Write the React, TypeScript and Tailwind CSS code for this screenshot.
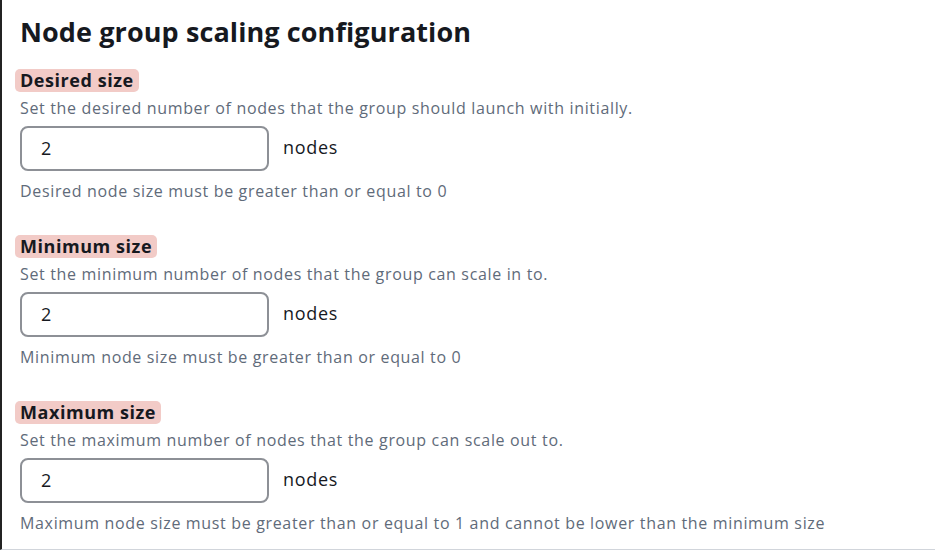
import React from "react";

interface SizeField {
  label: string;
  description: string;
  value: string;
  hint: string;
}

const FIELDS: SizeField[] = [
  {
    label: "Desired size",
    description:
      "Set the desired number of nodes that the group should launch with initially.",
    value: "2",
    hint: "Desired node size must be greater than or equal to 0",
  },
  {
    label: "Minimum size",
    description: "Set the minimum number of nodes that the group can scale in to.",
    value: "2",
    hint: "Minimum node size must be greater than or equal to 0",
  },
  {
    label: "Maximum size",
    description: "Set the maximum number of nodes that the group can scale out to.",
    value: "2",
    hint: "Maximum node size must be greater than or equal to 1 and cannot be lower than the minimum size",
  },
];

const SizeInput: React.FC<{ field: SizeField }> = ({ field }) => (
  <div className="flex flex-col">
    <div className="flex">
      <span className="-ml-[5px] rounded-[5px] bg-[#f2cbc7] px-[5px] text-[18px] font-bold leading-[23px] tracking-[0.55px] text-[#16191f]">
        {field.label}
      </span>
    </div>
    <p className="mt-[6px] text-[16px] leading-[20px] tracking-[0.66px] text-[#5f6b7a]">
      {field.description}
    </p>
    <div className="mt-[8px] flex items-center gap-[14px]">
      <div className="flex h-[45px] w-[249px] items-center rounded-[8px] border-2 border-[#8d9096] bg-white pl-[19px] text-[18px] text-[#16191f]">
        {field.value}
      </div>
      <span className="-mt-[2px] text-[18px] tracking-[0.7px] text-[#16191f]">nodes</span>
    </div>
    <p className="mt-[10px] text-[16px] leading-[20px] tracking-[0.66px] text-[#5f6b7a]">
      {field.hint}
    </p>
  </div>
);

export default function App() {
  return (
    <div
      className="h-[552px] w-[935px] bg-white"
      style={{ fontFamily: '"Open Sans", "Noto Sans", sans-serif' }}
    >
      <div className="h-[550px] border-b border-l-2 border-b-[#d1d5db] border-l-[#232323] pl-[18px] pt-[15px]">
        <h2 className="text-[27px] font-bold leading-[34px] tracking-[0.1px] text-[#16191f]">
          Node group scaling configuration
        </h2>
        <div className="mt-[20px] flex flex-col gap-[34px]">
          {FIELDS.map((field) => (
            <SizeInput key={field.label} field={field} />
          ))}
        </div>
      </div>
    </div>
  );
}
